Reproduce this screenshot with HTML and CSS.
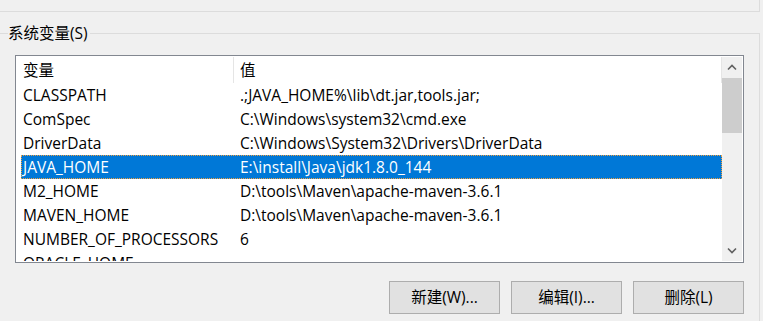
FILE: index.html
```html
<!DOCTYPE html>
<html>
<head>
<meta charset="utf-8">
<link rel="stylesheet" href="styles.css">
</head>
<body>
<div class="prev-group"></div>
<fieldset class="group">
  <legend class="group-title">系统变量(S)</legend>
  <div class="listbox">
    <div class="list-area">
      <div class="list-header">
        <div class="hcell hcell-name">变量</div>
        <div class="hcell hcell-value">值</div>
      </div>
      <div class="row"><div class="cell-name">CLASSPATH</div><div class="cell-value">.;JAVA_HOME%\lib\dt.jar,tools.jar;</div></div>
      <div class="row"><div class="cell-name">ComSpec</div><div class="cell-value">C:\Windows\system32\cmd.exe</div></div>
      <div class="row"><div class="cell-name">DriverData</div><div class="cell-value">C:\Windows\System32\Drivers\DriverData</div></div>
      <div class="row selected"><div class="cell-name">JAVA_HOME</div><div class="cell-value">E:\install\Java\jdk1.8.0_144</div></div>
      <div class="row"><div class="cell-name">M2_HOME</div><div class="cell-value">D:\tools\Maven\apache-maven-3.6.1</div></div>
      <div class="row"><div class="cell-name">MAVEN_HOME</div><div class="cell-value">D:\tools\Maven\apache-maven-3.6.1</div></div>
      <div class="row"><div class="cell-name">NUMBER_OF_PROCESSORS</div><div class="cell-value">6</div></div>
      <div class="row"><div class="cell-name">ORACLE_HOME</div><div class="cell-value"></div></div>
    </div>
    <div class="scrollbar">
      <div class="sb-btn">
        <svg width="10" height="7" viewBox="0 0 10 7"><path d="M1 5.5 L5 1.5 L9 5.5" fill="none" stroke="#606060" stroke-width="1.6"/></svg>
      </div>
      <div class="sb-track">
        <div class="sb-thumb"></div>
      </div>
      <div class="sb-btn">
        <svg width="10" height="7" viewBox="0 0 10 7"><path d="M1 1.5 L5 5.5 L9 1.5" fill="none" stroke="#606060" stroke-width="1.6"/></svg>
      </div>
    </div>
  </div>
  <div class="buttons">
    <div class="btn">新建(W)...</div>
    <div class="btn">编辑(I)...</div>
    <div class="btn">删除(L)</div>
  </div>
</fieldset>
</body>
</html>
```

FILE: styles.css
```css
html, body {
  margin: 0;
  padding: 0;
  background: #f0f0f0;
  overflow: hidden;
  width: 763px;
  height: 321px;
}
body {
  font-family: "Open Sans", "Noto Sans CJK SC", sans-serif;
  font-size: 15.5px;
  color: #000;
}
.prev-group {
  box-sizing: border-box;
  width: 762px;
  height: 12px;
  margin-left: -2px;
  border-right: 1px solid #dcdcdc;
  border-bottom: 1px solid #dcdcdc;
}
.group {
  box-sizing: border-box;
  width: 762px;
  height: 300px;
  margin: 11px 0 0 -2px;
  padding: 0;
  border: 1px solid #dcdcdc;
  min-width: 0;
}
.group-title {
  margin-left: 9px;
  padding: 0 2px 0 0;
  line-height: 20px;
  height: 20px;
}
.listbox {
  box-sizing: border-box;
  width: 729px;
  height: 208px;
  margin: 12px 0 0 16px;
  padding: 1px;
  border: 1px solid #828790;
  background: #fff;
  display: flex;
}
.list-area {
  flex: 1;
  overflow: hidden;
}
.list-header {
  display: flex;
  height: 26px;
  border-right: 1px solid #e5e5e5;
  padding-left: 4px;
}
.hcell {
  line-height: 26px;
}
.hcell-name {
  box-sizing: border-box;
  width: 213px;
  padding-left: 2px;
  border-right: 1px solid #e5e5e5;
}
.hcell-value {
  padding-left: 6px;
}
.row {
  box-sizing: border-box;
  display: flex;
  height: 24px;
  line-height: 22px;
  margin-left: 4px;
  border: 1px solid transparent;
  white-space: nowrap;
}
.cell-name {
  box-sizing: border-box;
  width: 212px;
  padding-left: 1px;
}
.cell-value {
  padding-left: 6px;
}
.row.selected {
  background: #0078d7;
  color: #fff;
  border: 1px dotted #f0a040;
}
.scrollbar {
  width: 20px;
  background: #f0f0f0;
  display: flex;
  flex-direction: column;
}
.sb-btn {
  height: 21px;
  display: flex;
  align-items: center;
  justify-content: center;
}
.sb-track {
  flex: 1;
}
.sb-thumb {
  height: 55px;
  background: #cdcdcd;
}
.buttons {
  display: flex;
  gap: 11px;
  margin: 18px 0 0 390px;
}
.btn {
  box-sizing: border-box;
  width: 111px;
  height: 33px;
  background: #e1e1e1;
  border: 1px solid #adadad;
  text-align: center;
  line-height: 30px;
}
```
